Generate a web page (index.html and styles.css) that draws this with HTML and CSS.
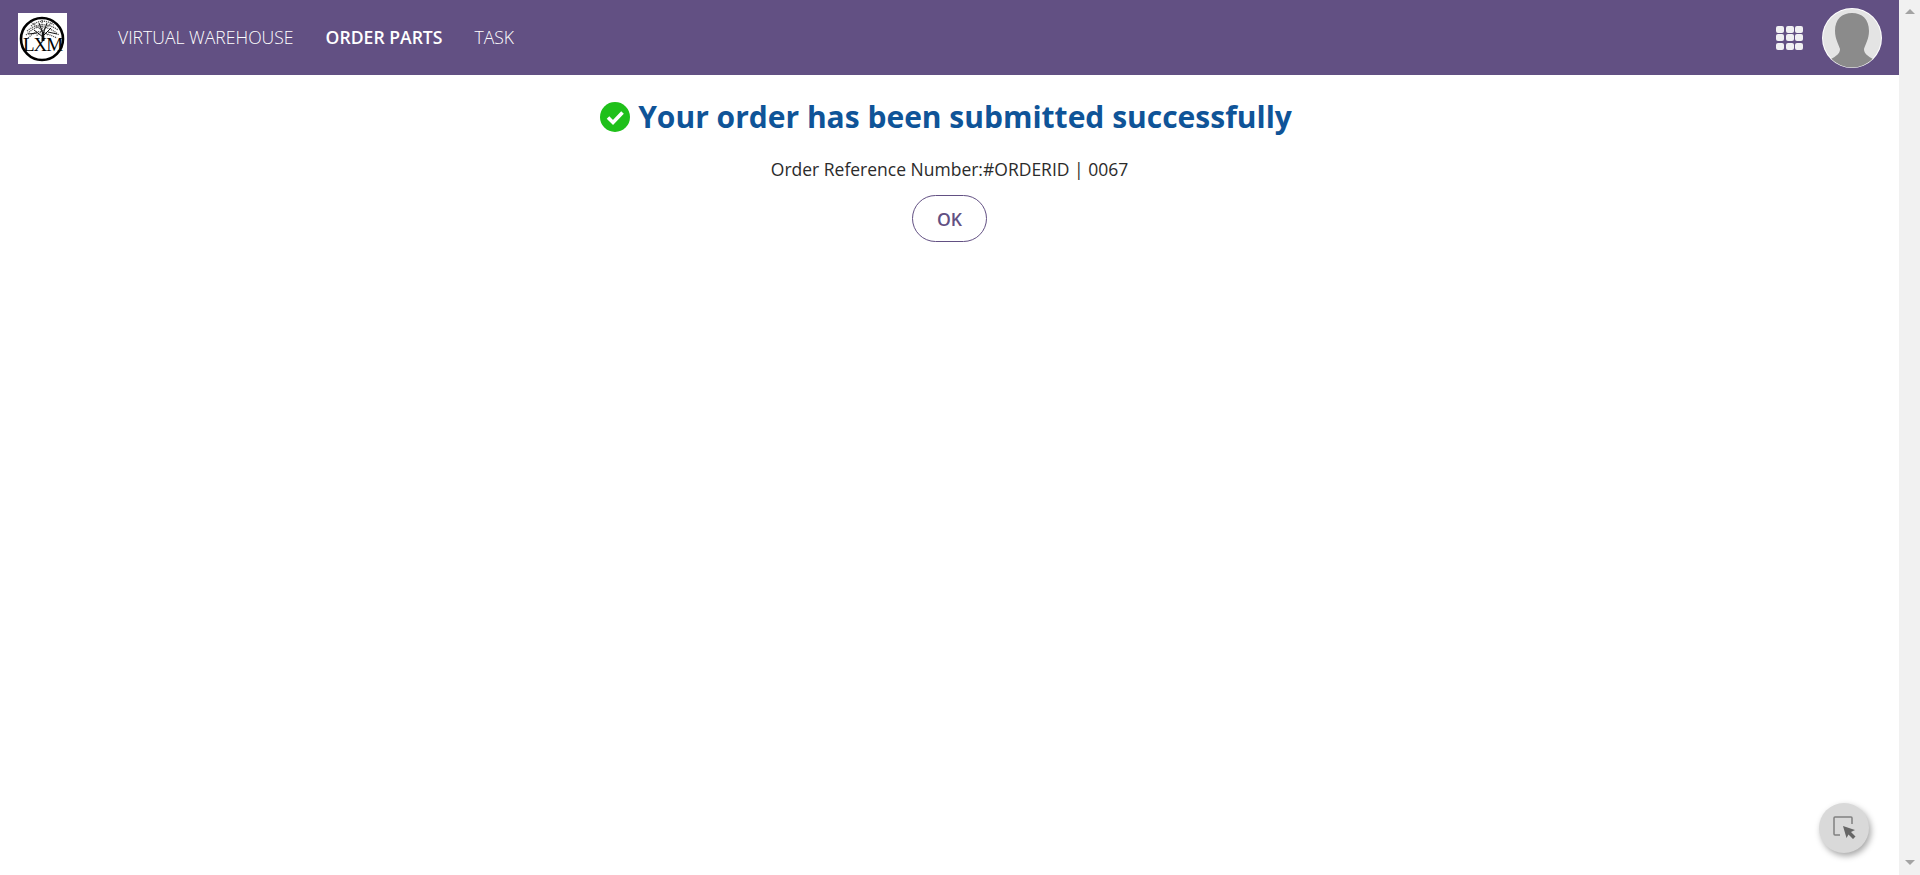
FILE: index.html
```html
<!DOCTYPE html>
<html lang="en">
<head>
<meta charset="utf-8">
<title>Order submitted</title>
<link rel="stylesheet" href="styles.css">
</head>
<body>
<div class="app">
  <div class="page">
    <header class="topbar">
      <div class="logo">
        <svg width="49" height="51" viewBox="0 0 49 51">
          <rect width="49" height="51" fill="#fff"/>
          <circle cx="24" cy="26" r="21" fill="none" stroke="#000" stroke-width="2.6"/>
          <g fill="none" stroke="#555" stroke-width="1.3" stroke-dasharray="1.2 .8">
            <path d="M13 13 Q24 4 36 12"/>
            <path d="M9 18 Q24 6 40 17"/>
            <path d="M8 22 Q18 12 26 14 T41 22"/>
            <path d="M10 25 Q18 17 24 19 T39 25"/>
            <path d="M13 9 L30 22 M35 9 L18 23 M24 7 L24 18"/>
          </g>
          <g fill="none" stroke="#111" stroke-width="1">
            <path d="M25 24 L16 17 M25 23 L33 15 M25 21 L21 10 M25 21 L29 10 M19 20 L10 21 M30 19 L39 21"/>
          </g>
          <path d="M23.5 28 L23.8 20 L26.2 20 L26.5 28 Z" fill="#111"/>
        </svg>
        <span class="logo-text">LXM</span>
      </div>
      <nav class="nav">
        <a class="nav-link">VIRTUAL WAREHOUSE</a>
        <a class="nav-link nav-link-active">ORDER PARTS</a>
        <a class="nav-link">TASK</a>
      </nav>
      <div class="tools">
        <div class="apps">
          <span></span><span></span><span></span>
          <span></span><span></span><span></span>
          <span></span><span></span><span></span>
        </div>
        <svg class="avatar" width="60" height="60" viewBox="0 0 60 60">
          <defs><clipPath id="av"><circle cx="30" cy="30" r="29.5"/></clipPath></defs>
          <circle cx="30" cy="30" r="30" fill="#fff"/>
          <circle cx="30" cy="30" r="29" fill="#e4e4e4"/>
          <path clip-path="url(#av)" fill="#8b8b8b" d="M30 5 C20 5 13 11 13 23 C13 31 17 37 18 41 C18 46 14 48 9 51 L9 60 L51 60 L51 51 C46 48 42 46 42 41 C43 37 47 31 47 23 C47 11 40 5 30 5 Z"/>
        </svg>
      </div>
    </header>
    <main class="content">
      <h1 class="title">
        <svg class="check" width="30" height="30" viewBox="0 0 30 30">
          <circle cx="15" cy="15" r="15" fill="#1fc01a"/>
          <path d="M8 15.5 L13 20.5 L22.5 10.5" fill="none" stroke="#fff" stroke-width="3.6"/>
        </svg>
        <span>Your order has been submitted successfully</span>
      </h1>
      <p class="ref">Order Reference Number:#ORDERID | 0067</p>
      <button class="ok">OK</button>
    </main>
  </div>
  <aside class="scrollbar">
    <span class="arrow-up"></span>
    <span class="arrow-down"></span>
  </aside>
</div>
<button class="float-btn" aria-label="Select">
  <svg width="24" height="24" viewBox="0 0 24 24">
    <path d="M8 19 H3 a1 1 0 0 1 -1 -1 V2 a1 1 0 0 1 1 -1 H19 a1 1 0 0 1 1 1 V8" fill="none" stroke="#808080" stroke-width="1.5"/>
    <path d="M11 10 L23 14 L19 16 L23.5 20.5 L21 23 L16.5 18.5 L14.5 22 Z" fill="#666"/>
  </svg>
</button>
</body>
</html>
```
FILE: styles.css
```css
* { box-sizing: border-box; }
html, body { margin: 0; height: 100%; overflow: hidden; }
body { font-family: "Open Sans", "Liberation Sans", sans-serif; background: #fff; color: #2b2b2b; }
.app { display: flex; height: 875px; }
.page { flex: 1; min-width: 0; display: flex; flex-direction: column; }
.topbar { height: 75px; background: #625083; display: flex; align-items: center; padding: 0 17px 0 18px; }
.logo { position: relative; width: 49px; height: 51px; flex: none; margin-top: 2px; }
.logo svg { display: block; }
.logo-text { position: absolute; left: 0; right: 0; top: 22px; text-align: center; font-family: "Liberation Serif", serif; font-size: 19px; line-height: 20px; letter-spacing: -1px; color: #000; }
.nav { display: flex; gap: 32px; margin-left: 51px; padding-bottom: 2px; }
.nav-link { color: #fff; font-size: 17.6px; font-weight: 300; white-space: nowrap; }
.nav-link-active { font-weight: 600; }
.tools { margin-left: auto; display: flex; align-items: center; gap: 19px; }
.apps { display: grid; grid-template-columns: repeat(3, 8px); grid-auto-rows: 7px; gap: 1.5px 1.5px; }
.apps span { background: #f0f0f2; border-radius: 2px; }
.avatar { display: block; }
.content { display: flex; flex-direction: column; align-items: center; }
.title { display: flex; align-items: center; gap: 8px; margin: 21px 7px 0 0; font-size: 30px; line-height: 41px; font-weight: 700; color: #0f5498; white-space: nowrap; }
.check { flex: none; }
.ref { margin: 20px 0 0; font-size: 17.5px; line-height: 24px; }
.ok { margin-top: 14px; width: 75px; height: 47px; border: 1px solid #625083; border-radius: 24px; background: #fff; color: #625083; font: 600 17.6px "Open Sans", sans-serif; }
.scrollbar { width: 21px; flex: none; background: #f1f1f1; display: flex; flex-direction: column; justify-content: space-between; align-items: center; padding: 9px 0 10px; }
.arrow-up { width: 0; height: 0; border: 5px solid transparent; border-top: 0; border-bottom: 5px solid #a3a3a3; }
.arrow-down { width: 0; height: 0; border: 5px solid transparent; border-bottom: 0; border-top: 5px solid #a3a3a3; }
.float-btn { position: fixed; left: 1819px; top: 803px; width: 50px; height: 50px; padding: 0; border: 0; border-radius: 50%; background: #d9d9d9; box-shadow: 2px 3px 6px rgba(0,0,0,.35); display: flex; align-items: center; justify-content: center; }
```
